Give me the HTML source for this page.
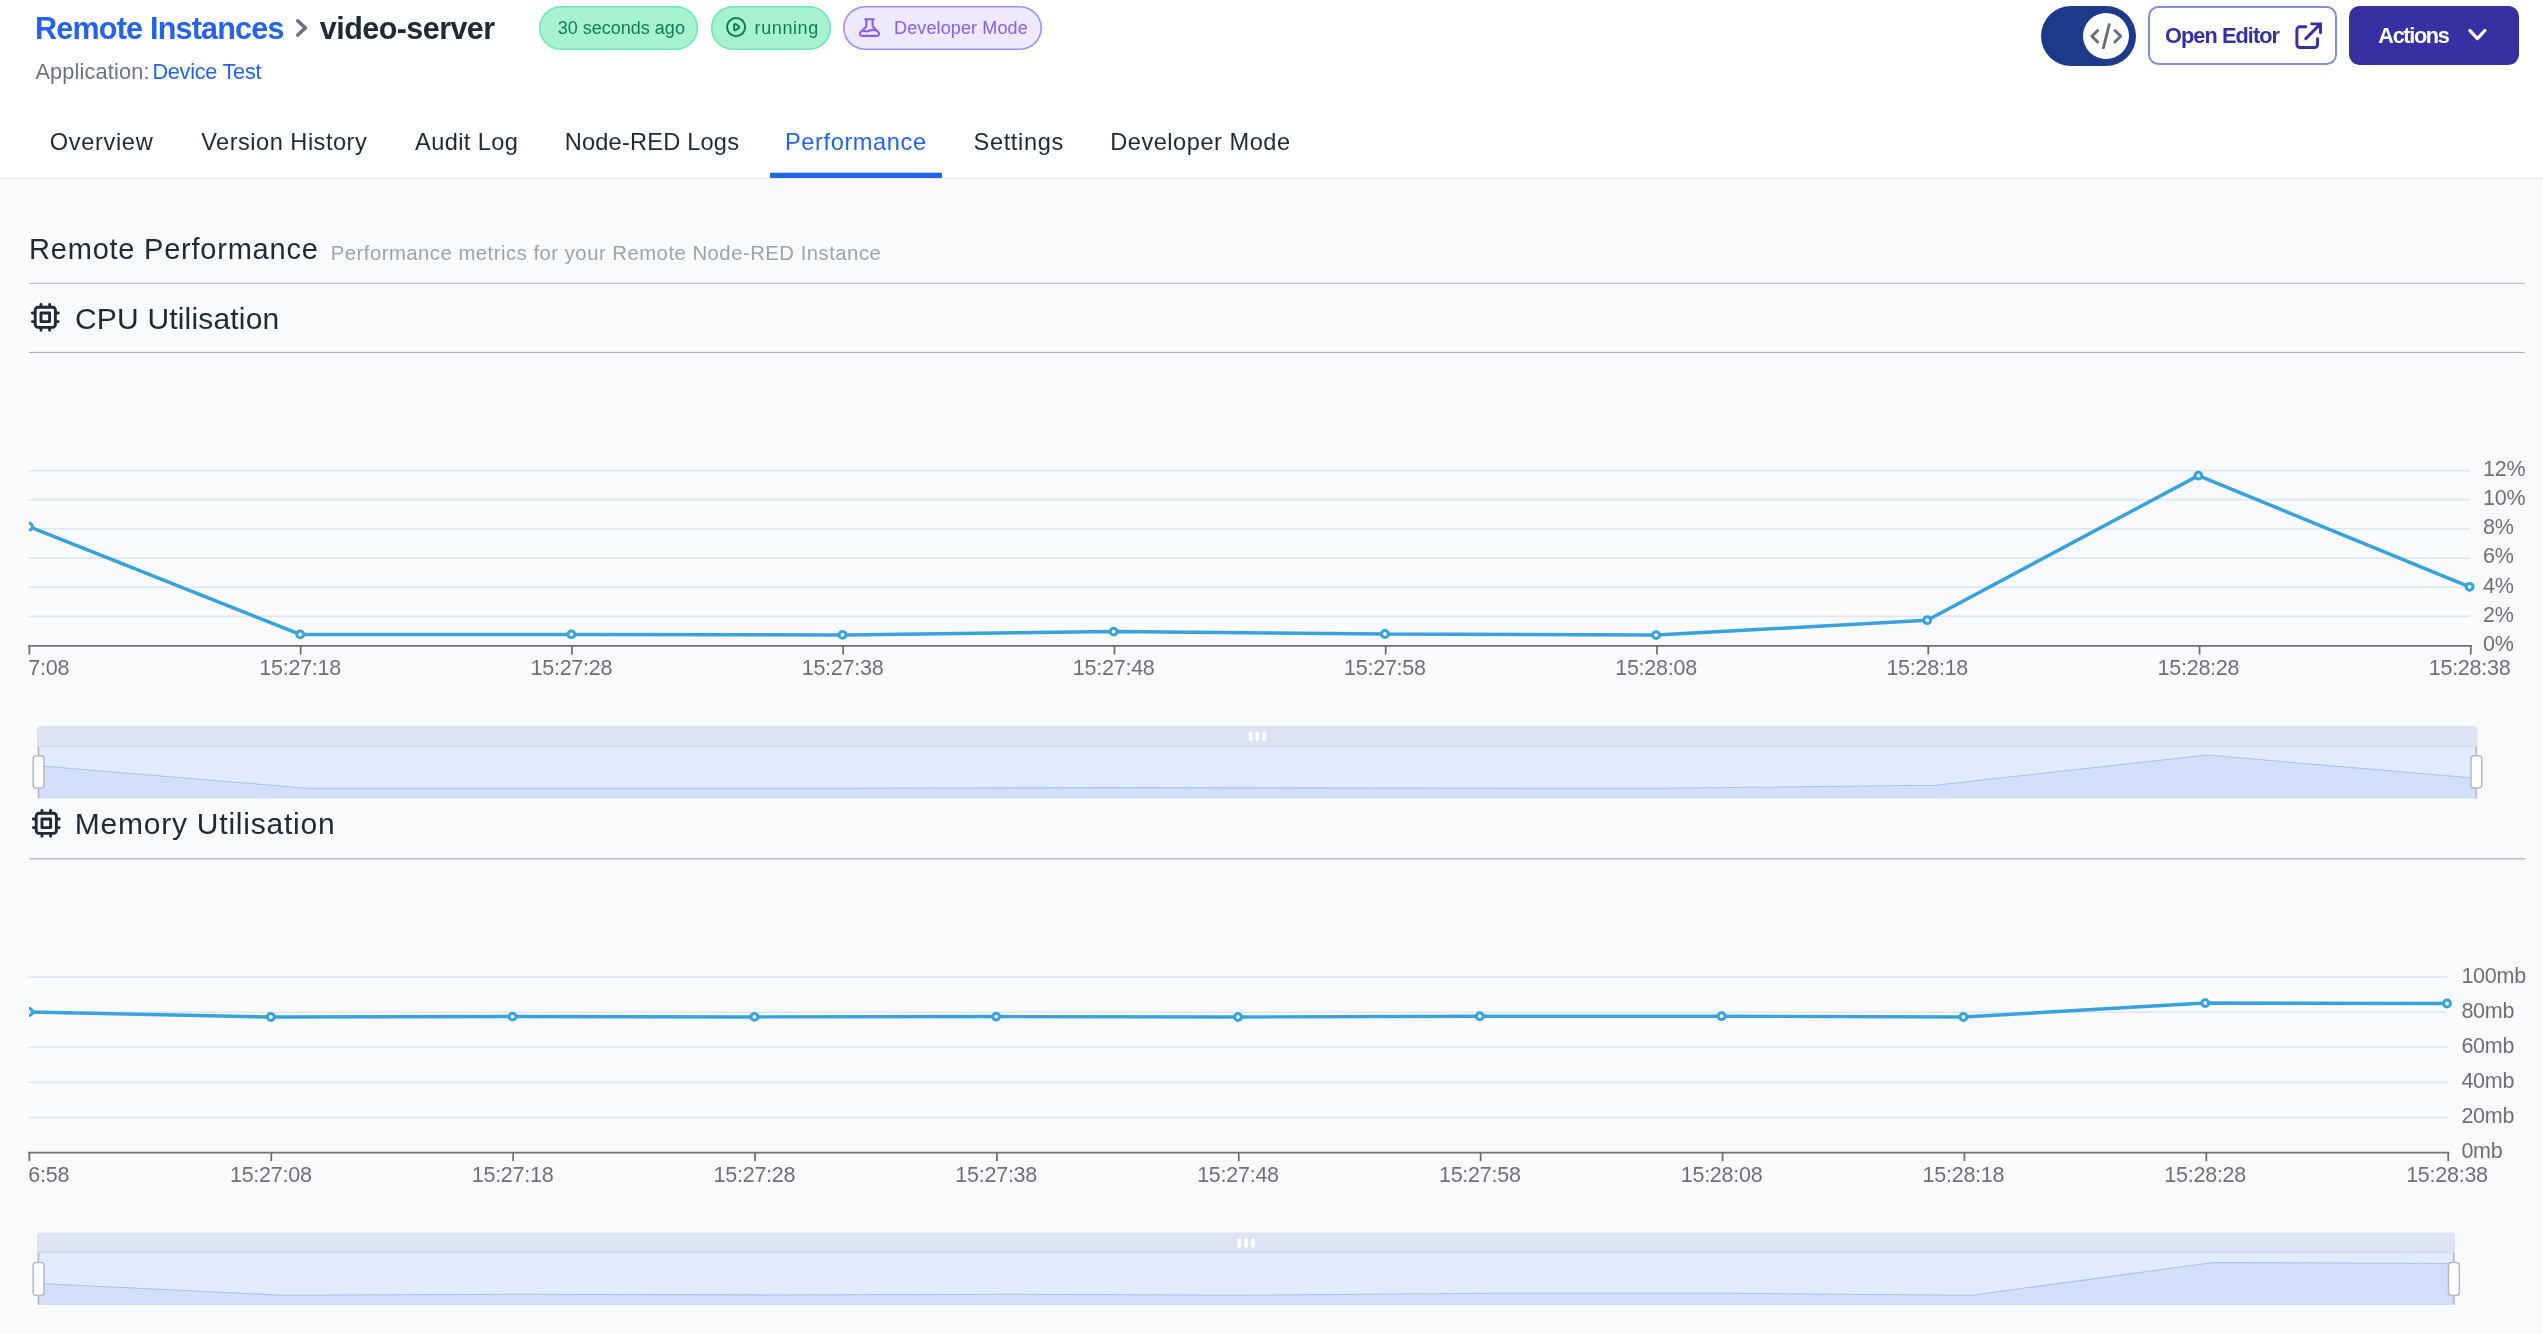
<!DOCTYPE html>
<html lang="en">
<head>
<meta charset="utf-8">
<title>video-server - Performance</title>
<style>
*{box-sizing:border-box;margin:0;padding:0}
html,body{width:2543px;height:1334px;overflow:hidden;background:#f9fafb}
body{position:relative;font-family:"Liberation Sans",sans-serif;color:#1f2937}
.t{position:absolute;white-space:nowrap;line-height:1}
.hdr{position:absolute;left:0;top:0;width:2543px;height:178px;background:#fff}
.hdrline{position:absolute;left:0;top:177.6px;width:2543px;height:1.6px;background:#e7e9ed}
h1,h2,h3{font-weight:normal}
.b{font-weight:bold}
.pill{position:absolute;top:6px;height:43.6px;border-radius:22px}
.green{background:#a7f3d0;box-shadow:inset 0 0 0 1.5px #6ee7b7;color:#047857}
.violet{background:#ede9fe;box-shadow:inset 0 0 0 1.6px #a78bfa;color:#8b5cf6}
.tab{font-size:23.6px;color:#1f2937}
.hr{position:absolute;left:28.5px;width:2496.5px;height:1px;background:#bbbfca}
svg{position:absolute;overflow:visible}
svg.charts{left:0;top:0}
.ico{fill:none;stroke-linecap:round;stroke-linejoin:round}
</style>
</head>
<body>
<header class="hdr"></header>
<div class="hdrline"></div>
<div id="layer" style="position:absolute;left:0;top:0;width:2543px;height:1334px;will-change:transform">

<!-- breadcrumb / title -->
<a class="t b" style="left:35.1px;top:12.8px;font-size:30.5px;letter-spacing:-0.78px;color:#2563eb">Remote Instances</a>
<svg class="ico" style="left:283.7px;top:11.2px" width="34.6" height="34.6" viewBox="0 0 24 24" stroke="#6b7280" stroke-width="2.5"><path d="M9.5 6.8l5.3 4.93-5.3 4.93"/></svg>
<h1 class="t b" style="left:319.8px;top:12.8px;font-size:30.5px;letter-spacing:-0.55px;color:#1f2937">video-server</h1>

<div class="t" style="left:35.4px;top:60.9px;font-size:21.7px;letter-spacing:0.18px;color:#6b7280">Application:</div>
<a class="t" style="left:152.4px;top:60.9px;font-size:21.7px;letter-spacing:-0.26px;color:#2563eb">Device Test</a>

<!-- status pills -->
<div class="pill green" style="left:539px;width:159px"></div>
<div class="t" style="left:557.8px;top:19px;font-size:18px;letter-spacing:0px;color:#0a7f59">30 seconds ago</div>

<div class="pill green" style="left:711px;width:120px"></div>
<svg class="ico" style="left:724px;top:15.4px" width="24.2" height="24.2" viewBox="0 0 24 24" stroke="#0a7f59" stroke-width="2"><path d="M14.752 11.168l-3.197-2.132A1 1 0 0010 9.87v4.263a1 1 0 001.555.832l3.197-2.132a1 1 0 000-1.664z"/><path d="M21 12a9 9 0 11-18 0 9 9 0 0118 0z"/></svg>
<div class="t" style="left:754.6px;top:19px;font-size:18px;letter-spacing:0.6px;color:#0a7f59">running</div>

<div class="pill violet" style="left:843px;width:198.5px"></div>
<svg class="ico" style="left:857.3px;top:15.1px" width="25" height="25" viewBox="0 0 24 24" stroke="#8b5cf6" stroke-width="2"><path d="M19.428 15.428a2 2 0 00-1.022-.547l-2.387-.477a6 6 0 00-3.86.517l-.318.158a6 6 0 01-3.86.517L6.05 15.21a2 2 0 00-1.806.547M8 4h8l-1 1v5.172a2 2 0 00.586 1.414l5 5c1.26 1.26.367 3.414-1.415 3.414H4.828c-1.782 0-2.674-2.154-1.414-3.414l5-5A2 2 0 009 10.172V5L8 4z"/></svg>
<div class="t" style="left:894.1px;top:19px;font-size:18px;letter-spacing:0.12px;color:#8b5cf6">Developer Mode</div>

<!-- right-hand controls -->
<div style="position:absolute;left:2041.1px;top:5.9px;width:94.7px;height:60px;border-radius:30px;background:#1e3a8a"></div>
<div style="position:absolute;left:2083px;top:12.8px;width:45.8px;height:45.8px;border-radius:50%;background:#fff"></div>
<svg class="ico" style="left:2088.8px;top:19.4px" width="34.6" height="34.6" viewBox="0 0 24 24" stroke="#666e7b" stroke-width="2"><path d="M10 20l4-16m4 4l4 4-4 4M6 16l-4-4 4-4"/></svg>

<div style="position:absolute;left:2147.9px;top:5.9px;width:189px;height:59.6px;border-radius:10.4px;border:2px solid #838ce0;background:#fff"></div>
<div class="t b" style="left:2165.1px;top:24.9px;font-size:21.7px;letter-spacing:-0.92px;color:#3730a3">Open Editor</div>
<svg class="ico" style="left:2290.8px;top:18.2px" width="35.4" height="35.4" viewBox="0 0 24 24" stroke="#3730a3" stroke-width="2"><path d="M10 6H6a2 2 0 00-2 2v10a2 2 0 002 2h10a2 2 0 002-2v-4M14 4h6m0 0v6m0-6L10 14"/></svg>

<div style="position:absolute;left:2348.8px;top:6px;width:170.2px;height:58.6px;border-radius:10.4px;background:#3730a3"></div>
<div class="t b" style="left:2378.3px;top:25px;font-size:21.7px;letter-spacing:-1.33px;color:#fff">Actions</div>
<svg class="ico" style="left:2460px;top:20px" width="36" height="30" viewBox="2460 20 36 30" stroke="#fff" stroke-width="3.3"><path d="M2469.9 30.5L2477.4 38.6L2484.9 30.5"/></svg>

<!-- tabs -->
<a class="t tab" style="left:49.8px;top:131px;letter-spacing:0.65px">Overview</a>
<a class="t tab" style="left:201.2px;top:131px;letter-spacing:0.49px">Version History</a>
<a class="t tab" style="left:415px;top:131px;letter-spacing:0.4px">Audit Log</a>
<a class="t tab" style="left:564.7px;top:131px;letter-spacing:0.21px">Node-RED Logs</a>
<a class="t tab" style="left:785px;top:131px;letter-spacing:0.6px;color:#2563eb">Performance</a>
<div style="position:absolute;left:770px;top:173px;width:172px;height:5px;background:#2563eb;box-shadow:0 -1px 0 #bcd3f8"></div>
<a class="t tab" style="left:973.5px;top:131px;letter-spacing:0.64px">Settings</a>
<a class="t tab" style="left:1110.2px;top:131px;letter-spacing:0.52px">Developer Mode</a>

<!-- section title -->
<h2 class="t" style="left:29.1px;top:235.2px;font-size:29px;letter-spacing:0.77px;color:#1f2937">Remote Performance</h2>
<div class="t" style="left:330.7px;top:243.1px;font-size:20.3px;letter-spacing:0.5px;color:#9ca3af">Performance metrics for your Remote Node-RED Instance</div>
<div class="hr" style="top:283px;box-shadow:0 -1px 0 #e8e9ec"></div>

<svg class="ico" style="left:28.2px;top:300px" width="34.6" height="34.6" viewBox="0 0 24 24" stroke="#1f2937" stroke-width="2"><path d="M9 3v2m6-2v2M9 19v2m6-2v2M5 9H3m2 6H3m18-6h-2m2 6h-2M7 19h10a2 2 0 002-2V7a2 2 0 00-2-2H7a2 2 0 00-2 2v10a2 2 0 002 2zM9 9h6v6H9V9z"/></svg>
<h3 class="t" style="left:75px;top:303.6px;font-size:30px;letter-spacing:0.18px;color:#1f2937">CPU Utilisation</h3>
<div class="hr" style="top:352px;background:#adb1bc;box-shadow:0 -1px 0 #eef0f5"></div>

<svg class="ico" style="left:28.6px;top:806.4px" width="34.6" height="34.6" viewBox="0 0 24 24" stroke="#1f2937" stroke-width="2"><path d="M9 3v2m6-2v2M9 19v2m6-2v2M5 9H3m2 6H3m18-6h-2m2 6h-2M7 19h10a2 2 0 002-2V7a2 2 0 00-2-2H7a2 2 0 00-2 2v10a2 2 0 002 2zM9 9h6v6H9V9z"/></svg>
<h3 class="t" style="left:74.7px;top:809px;font-size:30px;letter-spacing:0.78px;color:#1f2937">Memory Utilisation</h3>
<div class="hr" style="top:858px;box-shadow:0 1px 0 #e0e1e6"></div>

<svg class="charts" width="2543" height="1334" viewBox="0 0 2543 1334">
<style>.ax{font-family:"Liberation Sans",sans-serif;font-size:21.5px;letter-spacing:-0.25px;fill:#6E7079;}</style>
<line x1="28.2" x2="2470.0" y1="470.6" y2="470.6" stroke="#E0E6F1" stroke-width="1.6"/>
<line x1="28.2" x2="2470.0" y1="499.6" y2="499.6" stroke="#E0E6F1" stroke-width="1.6"/>
<line x1="28.2" x2="2470.0" y1="528.8" y2="528.8" stroke="#E0E6F1" stroke-width="1.6"/>
<line x1="28.2" x2="2470.0" y1="558.1" y2="558.1" stroke="#E0E6F1" stroke-width="1.6"/>
<line x1="28.2" x2="2470.0" y1="587.3" y2="587.3" stroke="#E0E6F1" stroke-width="1.6"/>
<line x1="28.2" x2="2470.0" y1="616.4" y2="616.4" stroke="#E0E6F1" stroke-width="1.6"/>
<line x1="28.1" x2="2471.8" y1="645.9" y2="645.9" stroke="#6E7079" stroke-width="1.8"/>
<line x1="29.40" x2="29.40" y1="645.9" y2="654.5" stroke="#6E7079" stroke-width="1.8"/>
<text x="28.3" y="675.1" text-anchor="start" class="ax">7:08</text>
<line x1="300.67" x2="300.67" y1="645.9" y2="654.5" stroke="#6E7079" stroke-width="1.8"/>
<text x="300.17777777777775" y="675.1" text-anchor="middle" class="ax">15:27:18</text>
<line x1="571.93" x2="571.93" y1="645.9" y2="654.5" stroke="#6E7079" stroke-width="1.8"/>
<text x="571.3555555555555" y="675.1" text-anchor="middle" class="ax">15:27:28</text>
<line x1="843.20" x2="843.20" y1="645.9" y2="654.5" stroke="#6E7079" stroke-width="1.8"/>
<text x="842.5333333333333" y="675.1" text-anchor="middle" class="ax">15:27:38</text>
<line x1="1114.47" x2="1114.47" y1="645.9" y2="654.5" stroke="#6E7079" stroke-width="1.8"/>
<text x="1113.711111111111" y="675.1" text-anchor="middle" class="ax">15:27:48</text>
<line x1="1385.73" x2="1385.73" y1="645.9" y2="654.5" stroke="#6E7079" stroke-width="1.8"/>
<text x="1384.8888888888887" y="675.1" text-anchor="middle" class="ax">15:27:58</text>
<line x1="1657.00" x2="1657.00" y1="645.9" y2="654.5" stroke="#6E7079" stroke-width="1.8"/>
<text x="1656.0666666666666" y="675.1" text-anchor="middle" class="ax">15:28:08</text>
<line x1="1928.27" x2="1928.27" y1="645.9" y2="654.5" stroke="#6E7079" stroke-width="1.8"/>
<text x="1927.2444444444443" y="675.1" text-anchor="middle" class="ax">15:28:18</text>
<line x1="2199.53" x2="2199.53" y1="645.9" y2="654.5" stroke="#6E7079" stroke-width="1.8"/>
<text x="2198.422222222222" y="675.1" text-anchor="middle" class="ax">15:28:28</text>
<line x1="2470.80" x2="2470.80" y1="645.9" y2="654.5" stroke="#6E7079" stroke-width="1.8"/>
<text x="2469.6" y="675.1" text-anchor="middle" class="ax">15:28:38</text>
<text x="2483.0" y="476.1" text-anchor="start" class="ax">12%</text>
<text x="2483.0" y="505.22" text-anchor="start" class="ax">10%</text>
<text x="2483.0" y="534.34" text-anchor="start" class="ax">8%</text>
<text x="2483.0" y="563.46" text-anchor="start" class="ax">6%</text>
<text x="2483.0" y="592.58" text-anchor="start" class="ax">4%</text>
<text x="2483.0" y="621.7" text-anchor="start" class="ax">2%</text>
<text x="2483.0" y="650.82" text-anchor="start" class="ax">0%</text>
<clipPath id="c29645"><rect x="29.0" y="385.9" width="2461.0" height="280"/></clipPath>
<g clip-path="url(#c29645)"><polyline points="29.0,526.7 300.2,634.4 571.4,634.4 842.5,634.9 1113.7,631.6 1384.9,634.0 1656.1,635.1 1927.2,620.2 2198.4,475.6 2469.6,586.8" fill="none" stroke="#37a2db" stroke-width="3.46" stroke-linejoin="bevel"/>
<circle cx="29.0" cy="526.7" r="3.4" fill="#fff" stroke="#37a2db" stroke-width="3"/>
<circle cx="300.2" cy="634.4" r="3.4" fill="#fff" stroke="#37a2db" stroke-width="3"/>
<circle cx="571.4" cy="634.4" r="3.4" fill="#fff" stroke="#37a2db" stroke-width="3"/>
<circle cx="842.5" cy="634.9" r="3.4" fill="#fff" stroke="#37a2db" stroke-width="3"/>
<circle cx="1113.7" cy="631.6" r="3.4" fill="#fff" stroke="#37a2db" stroke-width="3"/>
<circle cx="1384.9" cy="634.0" r="3.4" fill="#fff" stroke="#37a2db" stroke-width="3"/>
<circle cx="1656.1" cy="635.1" r="3.4" fill="#fff" stroke="#37a2db" stroke-width="3"/>
<circle cx="1927.2" cy="620.2" r="3.4" fill="#fff" stroke="#37a2db" stroke-width="3"/>
<circle cx="2198.4" cy="475.6" r="3.4" fill="#fff" stroke="#37a2db" stroke-width="3"/>
<circle cx="2469.6" cy="586.8" r="3.4" fill="#fff" stroke="#37a2db" stroke-width="3"/>
</g>
<path d="M37.0,747.2 V729.0 a3,3 0 0 1 3,-3 H2474.5 a3,3 0 0 1 3,3 V747.2 Z" fill="#dde3f3"/>
<rect x="38.5" y="747.2" width="2437.8" height="51.09999999999991" fill="#e2ebfc"/>
<rect x="37.0" y="746.0" width="2440.5" height="1.6" fill="#d5ddf1"/>
<polygon points="38.5,798.3 38.5,765.8 306.7,788.2 578.1,788.2 849.6,788.3 1121.1,787.6 1392.6,788.1 1664.0,788.3 1935.5,785.2 2207.0,755.1 2476.3,778.3 2476.3,798.3" fill="#d1dff8"/>
<polyline points="38.5,765.8 306.7,788.2 578.1,788.2 849.6,788.3 1121.1,787.6 1392.6,788.1 1664.0,788.3 1935.5,785.2 2207.0,755.1 2476.3,778.3" fill="none" stroke="#a3c0f8" stroke-width="1.05"/>
<rect x="38.5" y="797.3" width="2437.8" height="1" fill="#d3dcf1"/>
<rect x="1248.7" y="731.4" width="3.8" height="9.8" rx="1.7" fill="#fff"/>
<rect x="1255.5" y="731.4" width="3.8" height="9.8" rx="1.7" fill="#fff"/>
<rect x="1262.3" y="731.4" width="3.8" height="9.8" rx="1.7" fill="#fff"/>
<line x1="38.5" x2="38.5" y1="747.2" y2="798.3" stroke="#b4b8c1" stroke-width="1.6"/>
<rect x="33.2" y="755.8" width="10.8" height="32.200000000000024" rx="3" fill="#fff" stroke="#b3b8c3" stroke-width="1.5"/>
<line x1="2476.3" x2="2476.3" y1="747.2" y2="798.3" stroke="#b4b8c1" stroke-width="1.6"/>
<rect x="2471.0" y="755.8" width="10.8" height="32.200000000000024" rx="3" fill="#fff" stroke="#b3b8c3" stroke-width="1.5"/>
<line x1="28.2" x2="2447.6" y1="977.1" y2="977.1" stroke="#E0E6F1" stroke-width="1.6"/>
<line x1="28.2" x2="2447.6" y1="1012.2" y2="1012.2" stroke="#E0E6F1" stroke-width="1.6"/>
<line x1="28.2" x2="2447.6" y1="1047.3" y2="1047.3" stroke="#E0E6F1" stroke-width="1.6"/>
<line x1="28.2" x2="2447.6" y1="1082.4" y2="1082.4" stroke="#E0E6F1" stroke-width="1.6"/>
<line x1="28.2" x2="2447.6" y1="1117.5" y2="1117.5" stroke="#E0E6F1" stroke-width="1.6"/>
<line x1="28.1" x2="2449.4" y1="1152.6" y2="1152.6" stroke="#6E7079" stroke-width="1.8"/>
<line x1="29.40" x2="29.40" y1="1152.6" y2="1161.1999999999998" stroke="#6E7079" stroke-width="1.8"/>
<text x="28.3" y="1182.0" text-anchor="start" class="ax">6:58</text>
<line x1="271.28" x2="271.28" y1="1152.6" y2="1161.1999999999998" stroke="#6E7079" stroke-width="1.8"/>
<text x="270.8" y="1182.0" text-anchor="middle" class="ax">15:27:08</text>
<line x1="513.16" x2="513.16" y1="1152.6" y2="1161.1999999999998" stroke="#6E7079" stroke-width="1.8"/>
<text x="512.6" y="1182.0" text-anchor="middle" class="ax">15:27:18</text>
<line x1="755.04" x2="755.04" y1="1152.6" y2="1161.1999999999998" stroke="#6E7079" stroke-width="1.8"/>
<text x="754.4000000000001" y="1182.0" text-anchor="middle" class="ax">15:27:28</text>
<line x1="996.92" x2="996.92" y1="1152.6" y2="1161.1999999999998" stroke="#6E7079" stroke-width="1.8"/>
<text x="996.2" y="1182.0" text-anchor="middle" class="ax">15:27:38</text>
<line x1="1238.80" x2="1238.80" y1="1152.6" y2="1161.1999999999998" stroke="#6E7079" stroke-width="1.8"/>
<text x="1238.0" y="1182.0" text-anchor="middle" class="ax">15:27:48</text>
<line x1="1480.68" x2="1480.68" y1="1152.6" y2="1161.1999999999998" stroke="#6E7079" stroke-width="1.8"/>
<text x="1479.8000000000002" y="1182.0" text-anchor="middle" class="ax">15:27:58</text>
<line x1="1722.56" x2="1722.56" y1="1152.6" y2="1161.1999999999998" stroke="#6E7079" stroke-width="1.8"/>
<text x="1721.6000000000001" y="1182.0" text-anchor="middle" class="ax">15:28:08</text>
<line x1="1964.44" x2="1964.44" y1="1152.6" y2="1161.1999999999998" stroke="#6E7079" stroke-width="1.8"/>
<text x="1963.4" y="1182.0" text-anchor="middle" class="ax">15:28:18</text>
<line x1="2206.32" x2="2206.32" y1="1152.6" y2="1161.1999999999998" stroke="#6E7079" stroke-width="1.8"/>
<text x="2205.2000000000003" y="1182.0" text-anchor="middle" class="ax">15:28:28</text>
<line x1="2448.20" x2="2448.20" y1="1152.6" y2="1161.1999999999998" stroke="#6E7079" stroke-width="1.8"/>
<text x="2447.0" y="1182.0" text-anchor="middle" class="ax">15:28:38</text>
<text x="2461.4" y="983.2" text-anchor="start" class="ax">100mb</text>
<text x="2461.4" y="1018.1600000000001" text-anchor="start" class="ax">80mb</text>
<text x="2461.4" y="1053.1200000000001" text-anchor="start" class="ax">60mb</text>
<text x="2461.4" y="1088.08" text-anchor="start" class="ax">40mb</text>
<text x="2461.4" y="1123.04" text-anchor="start" class="ax">20mb</text>
<text x="2461.4" y="1158.0" text-anchor="start" class="ax">0mb</text>
<clipPath id="c291152"><rect x="29.0" y="892.5999999999999" width="2438.6" height="280"/></clipPath>
<g clip-path="url(#c291152)"><polyline points="29.0,1012.0 270.8,1017.0 512.6,1016.6 754.4,1016.9 996.2,1016.6 1238.0,1017.0 1479.8,1016.2 1721.6,1016.2 1963.4,1017.0 2205.2,1003.1 2447.0,1003.5" fill="none" stroke="#37a2db" stroke-width="3.46" stroke-linejoin="bevel"/>
<circle cx="29.0" cy="1012.0" r="3.4" fill="#fff" stroke="#37a2db" stroke-width="3"/>
<circle cx="270.8" cy="1017.0" r="3.4" fill="#fff" stroke="#37a2db" stroke-width="3"/>
<circle cx="512.6" cy="1016.6" r="3.4" fill="#fff" stroke="#37a2db" stroke-width="3"/>
<circle cx="754.4" cy="1016.9" r="3.4" fill="#fff" stroke="#37a2db" stroke-width="3"/>
<circle cx="996.2" cy="1016.6" r="3.4" fill="#fff" stroke="#37a2db" stroke-width="3"/>
<circle cx="1238.0" cy="1017.0" r="3.4" fill="#fff" stroke="#37a2db" stroke-width="3"/>
<circle cx="1479.8" cy="1016.2" r="3.4" fill="#fff" stroke="#37a2db" stroke-width="3"/>
<circle cx="1721.6" cy="1016.2" r="3.4" fill="#fff" stroke="#37a2db" stroke-width="3"/>
<circle cx="1963.4" cy="1017.0" r="3.4" fill="#fff" stroke="#37a2db" stroke-width="3"/>
<circle cx="2205.2" cy="1003.1" r="3.4" fill="#fff" stroke="#37a2db" stroke-width="3"/>
<circle cx="2447.0" cy="1003.5" r="3.4" fill="#fff" stroke="#37a2db" stroke-width="3"/>
</g>
<path d="M37.0,1253.1 V1235.5 a3,3 0 0 1 3,-3 H2452.0 a3,3 0 0 1 3,3 V1253.1 Z" fill="#dde3f3"/>
<rect x="38.5" y="1253.1" width="2415.3" height="51.700000000000045" fill="#e2ebfc"/>
<rect x="37.0" y="1251.8999999999999" width="2418.0" height="1.6" fill="#d5ddf1"/>
<polygon points="38.5,1304.8 40.0,1283.4 281.5,1295.2 523.1,1294.2 764.6,1294.9 1006.1,1294.2 1247.7,1295.2 1489.2,1293.3 1730.7,1293.3 1972.2,1295.2 2213.8,1262.5 2453.8,1263.4 2453.8,1304.8" fill="#d1dff8"/>
<polyline points="40.0,1283.4 281.5,1295.2 523.1,1294.2 764.6,1294.9 1006.1,1294.2 1247.7,1295.2 1489.2,1293.3 1730.7,1293.3 1972.2,1295.2 2213.8,1262.5 2453.8,1263.4" fill="none" stroke="#a3c0f8" stroke-width="1.05"/>
<rect x="38.5" y="1303.8" width="2415.3" height="1" fill="#d3dcf1"/>
<rect x="1237.5" y="1237.9" width="3.8" height="9.8" rx="1.7" fill="#fff"/>
<rect x="1244.2" y="1237.9" width="3.8" height="9.8" rx="1.7" fill="#fff"/>
<rect x="1251.0" y="1237.9" width="3.8" height="9.8" rx="1.7" fill="#fff"/>
<line x1="38.5" x2="38.5" y1="1253.1" y2="1304.8" stroke="#b4b8c1" stroke-width="1.6"/>
<rect x="33.2" y="1262.6" width="10.8" height="33.00000000000009" rx="3" fill="#fff" stroke="#b3b8c3" stroke-width="1.5"/>
<line x1="2453.8" x2="2453.8" y1="1253.1" y2="1304.8" stroke="#b4b8c1" stroke-width="1.6"/>
<rect x="2448.5" y="1262.6" width="10.8" height="33.00000000000009" rx="3" fill="#fff" stroke="#b3b8c3" stroke-width="1.5"/>
</svg>
</div>
</body>
</html>
